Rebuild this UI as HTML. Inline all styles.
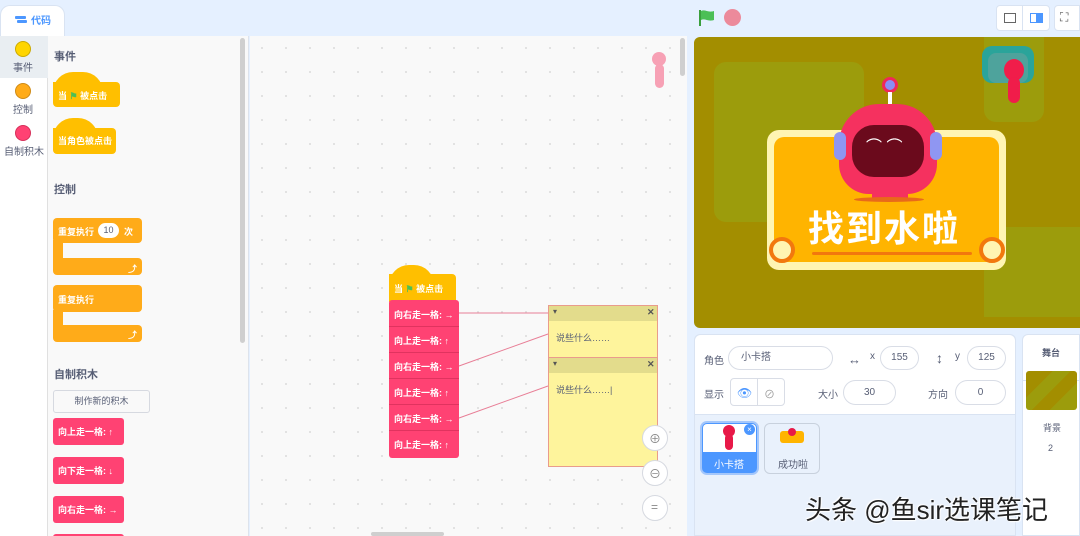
<!DOCTYPE html><html><head><meta charset="utf-8"><style>
*{margin:0;padding:0;box-sizing:border-box}
html,body{width:1080px;height:536px;overflow:hidden}
body{background:#e5f0ff;font-family:"Liberation Sans","Noto Sans CJK SC",sans-serif;position:relative;font-size:11px;color:#575e75}
.a{position:absolute}
.t{position:absolute;white-space:nowrap}
.bw{color:#fff;font-weight:bold;font-size:9px}
.pink{background:#ff4273;border-radius:3px;position:absolute}
.ctl{background:#ffab19;position:absolute}
.ev{background:#ffbf00;position:absolute}
.inp{position:absolute;background:#fff;border:1px solid #d9dde6;border-radius:14px;text-align:center;font-size:10px;color:#575e75}
.cir{position:absolute;width:26px;height:26px;border-radius:50%;background:#fff;border:1px solid #d6d9e0}
</style></head><body>
<div class="a" style="left:0;top:5px;width:65px;height:32px;background:#fff;border-radius:10px 10px 0 0;border:1px solid #d9e3f2;border-bottom:none"></div>
<div class="a" style="left:15px;top:16px;width:11px;height:3px;background:#4c97ff;border-radius:1px"></div>
<div class="a" style="left:17px;top:20px;width:10px;height:3px;background:#4c97ff;border-radius:1px"></div>
<div class="t" style="left:31px;top:12px;color:#4c97ff;font-size:10px;font-weight:bold">代码</div>
<div class="a" style="left:0;top:36px;width:48px;height:500px;background:#fff;border-right:1px solid #e0e0e0"></div>
<div class="a" style="left:0;top:36px;width:48px;height:42px;background:#e9eef2"></div>
<div class="a" style="left:15px;top:41px;width:16px;height:16px;border-radius:50%;background:#ffd500;border:1px solid #ccaa00"></div>
<div class="t" style="left:13px;top:59px;font-size:10px">事件</div>
<div class="a" style="left:15px;top:83px;width:16px;height:16px;border-radius:50%;background:#ffab19;border:1px solid #cf8b17"></div>
<div class="t" style="left:13px;top:101px;font-size:10px">控制</div>
<div class="a" style="left:15px;top:125px;width:16px;height:16px;border-radius:50%;background:#ff4273;border:1px solid #d6305a"></div>
<div class="t" style="left:4px;top:143px;font-size:10px">自制积木</div>
<div class="a" style="left:48px;top:36px;width:201px;height:500px;background:#f9f9f9;border-right:1px solid #dde3ec"></div>
<div class="a" style="left:240px;top:38px;width:5px;height:305px;background:#cfcfcf;border-radius:3px"></div>
<div class="t" style="left:54px;top:48px;font-size:11px;font-weight:bold;color:#575e75">事件</div>
<div class="ev" style="left:53px;top:72px;width:50px;height:20px;border-radius:25px 25px 0 0"></div>
<div class="ev" style="left:53px;top:82px;width:67px;height:25px;border-radius:0 4px 4px 4px"></div>
<div class="t bw" style="left:58px;top:89px">当 <span style="color:#4cbf56">⚑</span> 被点击</div>
<div class="ev" style="left:53px;top:118px;width:45px;height:20px;border-radius:25px 25px 0 0"></div>
<div class="ev" style="left:53px;top:128px;width:63px;height:26px;border-radius:0 4px 4px 4px"></div>
<div class="t bw" style="left:58px;top:134px">当角色被点击</div>
<div class="t" style="left:54px;top:181px;font-size:11px;font-weight:bold">控制</div>
<div class="ctl" style="left:53px;top:218px;width:89px;height:25px;border-radius:4px"></div>
<div class="ctl" style="left:53px;top:240px;width:10px;height:20px"></div>
<div class="ctl" style="left:53px;top:258px;width:89px;height:17px;border-radius:0 4px 4px 4px"></div>
<div class="t bw" style="left:58px;top:225px">重复执行</div>
<div class="a" style="left:98px;top:223px;width:21px;height:15px;background:#fff;border-radius:8px;font-size:9px;text-align:center;line-height:15px;color:#575e75">10</div>
<div class="t bw" style="left:124px;top:225px">次</div>
<div class="t bw" style="left:128px;top:262px">⤴</div>
<div class="ctl" style="left:53px;top:285px;width:89px;height:27px;border-radius:4px"></div>
<div class="ctl" style="left:53px;top:310px;width:10px;height:17px"></div>
<div class="ctl" style="left:53px;top:325px;width:89px;height:17px;border-radius:0 4px 4px 4px"></div>
<div class="t bw" style="left:58px;top:293px">重复执行</div>
<div class="t bw" style="left:128px;top:328px">⤴</div>
<div class="t" style="left:54px;top:366px;font-size:11px;font-weight:bold">自制积木</div>
<div class="a" style="left:53px;top:390px;width:97px;height:23px;background:#f9f9f9;border:1px solid #d6d9e0;border-radius:3px;font-size:9px;text-align:center;line-height:21px">制作新的积木</div>
<div class="pink" style="left:53px;top:418px;width:71px;height:27px"></div><div class="t bw" style="left:58px;top:425px">向上走一格: ↑</div>
<div class="pink" style="left:53px;top:457px;width:71px;height:27px"></div><div class="t bw" style="left:58px;top:464px">向下走一格: ↓</div>
<div class="pink" style="left:53px;top:496px;width:71px;height:27px"></div><div class="t bw" style="left:58px;top:503px">向右走一格: →</div>
<div class="pink" style="left:53px;top:534px;width:71px;height:10px"></div>
<div class="a" style="left:250px;top:36px;width:437px;height:500px;background-color:#f9f9f9;background-image:radial-gradient(#e0e0e0 1px,transparent 1.2px);background-size:24px 24px"></div>
<div class="a" style="left:680px;top:38px;width:5px;height:38px;background:#cfcfcf;border-radius:3px"></div>
<div class="a" style="left:371px;top:532px;width:73px;height:4px;background:#cfcfcf;border-radius:2px"></div>
<div class="a" style="left:652px;top:52px;width:14px;height:14px;border-radius:50%;background:#f7a1b5"></div>
<div class="a" style="left:655px;top:64px;width:9px;height:24px;border-radius:5px;background:#f7a1b5"></div>
<div class="ev" style="left:389px;top:265px;width:45px;height:20px;border-radius:25px 25px 0 0"></div>
<div class="ev" style="left:389px;top:274px;width:67px;height:28px;border-radius:0 4px 0 0"></div>
<div class="t bw" style="left:394px;top:282px">当 <span style="color:#4cbf56">⚑</span> 被点击</div>
<div class="pink" style="left:389px;top:300px;width:70px;height:158px"></div>
<div class="a" style="left:389px;top:326px;width:70px;height:1px;background:#e0335f"></div>
<div class="a" style="left:389px;top:352px;width:70px;height:1px;background:#e0335f"></div>
<div class="a" style="left:389px;top:378px;width:70px;height:1px;background:#e0335f"></div>
<div class="a" style="left:389px;top:404px;width:70px;height:1px;background:#e0335f"></div>
<div class="a" style="left:389px;top:430px;width:70px;height:1px;background:#e0335f"></div>
<div class="t bw" style="left:394px;top:308px">向右走一格: →</div>
<div class="t bw" style="left:394px;top:334px">向上走一格: ↑</div>
<div class="t bw" style="left:394px;top:360px">向右走一格: →</div>
<div class="t bw" style="left:394px;top:386px">向上走一格: ↑</div>
<div class="t bw" style="left:394px;top:412px">向右走一格: →</div>
<div class="t bw" style="left:394px;top:438px">向上走一格: ↑</div>
<svg class="a" style="left:0;top:0" width="1080" height="536"><g stroke="#e87e96" stroke-width="1"><line x1="459" y1="313" x2="548" y2="313"/><line x1="459" y1="366" x2="548" y2="334"/><line x1="459" y1="418" x2="548" y2="386"/></g></svg>
<div class="a" style="left:548px;top:305px;width:110px;height:53px;background:#fef49c;border:1px solid #e99c8c"></div>
<div class="a" style="left:549px;top:306px;width:108px;height:15px;background:#e3dc8c"></div>
<div class="t" style="left:553px;top:307px;font-size:8px;color:#555">▾</div><div class="t" style="left:647px;top:307px;font-size:9px;font-weight:bold;color:#555">✕</div>
<div class="t" style="left:556px;top:331px;font-size:9px">说些什么……</div>
<div class="a" style="left:548px;top:357px;width:110px;height:110px;background:#fef49c;border:1px solid #e99c8c"></div>
<div class="a" style="left:549px;top:358px;width:108px;height:15px;background:#e3dc8c"></div>
<div class="t" style="left:553px;top:359px;font-size:8px;color:#555">▾</div><div class="t" style="left:647px;top:359px;font-size:9px;font-weight:bold;color:#555">✕</div>
<div class="t" style="left:556px;top:383px;font-size:9px">说些什么……|</div>
<div class="cir" style="left:642px;top:425px"></div><div class="t" style="left:649px;top:430px;font-size:12px;color:#888">⊕</div>
<div class="cir" style="left:642px;top:460px"></div><div class="t" style="left:649px;top:465px;font-size:12px;color:#888">⊖</div>
<div class="cir" style="left:642px;top:495px"></div><div class="t" style="left:651px;top:500px;font-size:12px;color:#888">=</div>
<svg class="a" style="left:698px;top:8px" width="20" height="20"><path d="M2 2v16" stroke="#3a9f3d" stroke-width="2"/><path d="M3 3c4-2 7 2 13 0v9c-6 2-9-2-13 0z" fill="#4cbf56"/></svg>
<div class="a" style="left:724px;top:9px;width:17px;height:17px;border-radius:50%;background:#ec8a9b"></div>
<div class="a" style="left:996px;top:5px;width:54px;height:26px;background:#fff;border:1px solid #d9e3f2;border-radius:4px"></div>
<div class="a" style="left:1022px;top:5px;width:1px;height:26px;background:#d9e3f2"></div>
<div class="a" style="left:1004px;top:13px;width:12px;height:10px;border:1px solid #666"></div>
<div class="a" style="left:1030px;top:13px;width:13px;height:10px;border:1px solid #4c97ff;background:linear-gradient(90deg,#fff 45%,#4c97ff 45%)"></div>
<div class="a" style="left:1054px;top:5px;width:26px;height:26px;background:#fff;border:1px solid #d9e3f2;border-radius:4px 0 0 4px"></div>
<div class="t" style="left:1060px;top:10px;font-size:12px;color:#555">⛶</div>
<div class="a" style="left:694px;top:37px;width:386px;height:291px;background:#a38e00;border-radius:6px 0 0 6px;overflow:hidden">
 <div class="a" style="left:20px;top:25px;width:150px;height:160px;background:#9c9c0c;border-radius:12px"></div>
 <div class="a" style="left:80px;top:160px;width:110px;height:100px;background:#9c9c0c;border-radius:12px"></div>
 <div class="a" style="left:190px;top:140px;width:120px;height:80px;background:#9c9c0c;border-radius:12px"></div>
 <div class="a" style="left:220px;top:190px;width:180px;height:90px;background:#9c9c0c;border-radius:12px"></div>
 <div class="a" style="left:60px;top:215px;width:230px;height:80px;background:#a38e00;border-radius:12px"></div>
 <div class="a" style="left:290px;top:0;width:60px;height:85px;background:#9c9c0c;border-radius:0 0 12px 12px"></div>
 <div class="a" style="left:288px;top:9px;width:52px;height:37px;background:#2aa49a;border-radius:10px"></div>
 <div class="a" style="left:294px;top:16px;width:40px;height:30px;background:#4ea39c;border-radius:8px"></div>
 <div class="a" style="left:310px;top:22px;width:20px;height:22px;background:#f01d4a;border-radius:50%"></div>
 <div class="a" style="left:314px;top:40px;width:12px;height:26px;background:#f01d4a;border-radius:6px"></div>
 <div class="a" style="left:73px;top:93px;width:239px;height:140px;background:#fff5b3;border-radius:12px"></div>
 <div class="a" style="left:80px;top:100px;width:225px;height:125px;background:#ffb400;border-radius:10px"></div>
 <div class="a" style="left:118px;top:215px;width:160px;height:3px;background:#f2780e;border-radius:2px"></div>
 <div class="a" style="left:75px;top:200px;width:26px;height:26px;border-radius:50%;background:#fff5b3;border:4px solid #f2780e"></div>
 <div class="a" style="left:285px;top:200px;width:26px;height:26px;border-radius:50%;background:#fff5b3;border:4px solid #f2780e"></div>
 <div class="t" style="left:114px;top:163px;font-size:36px;font-weight:bold;color:#fff;letter-spacing:2px">找到水啦</div>
 <div class="a" style="left:188px;top:40px;width:16px;height:16px;border-radius:50%;background:#8a8ef5;border:3px solid #f0285a"></div>
 <div class="a" style="left:194px;top:55px;width:4px;height:14px;background:#fff"></div>
 <div class="a" style="left:145px;top:67px;width:98px;height:90px;background:#f5315f;border-radius:40px 40px 30px 30px"></div>
 <div class="a" style="left:140px;top:95px;width:12px;height:28px;background:#8f96f2;border-radius:6px"></div>
 <div class="a" style="left:236px;top:95px;width:12px;height:28px;background:#8f96f2;border-radius:6px"></div>
 <div class="a" style="left:158px;top:88px;width:72px;height:52px;background:#6b0a1c;border-radius:22px"></div>
 <div class="t" style="left:172px;top:96px;font-size:16px;color:#fff">⌒ ⌒</div>
 <div class="a" style="left:178px;top:150px;width:36px;height:12px;background:#f5315f"></div>
 <div class="a" style="left:160px;top:160px;width:70px;height:5px;background:#e86a1a;border-radius:50%"></div>
</div>
<div class="a" style="left:694px;top:334px;width:322px;height:202px;background:#e9f1fc;border:1px solid #d9e3f2;border-radius:6px 6px 0 0"></div>
<div class="a" style="left:695px;top:335px;width:320px;height:80px;background:#fff;border-radius:6px 6px 0 0;border-bottom:1px solid #d9e3f2"></div>
<div class="t" style="left:704px;top:352px;font-size:10px">角色</div>
<div class="inp" style="left:728px;top:346px;width:105px;height:24px;text-align:left;padding-left:12px;line-height:22px">小卡搭</div>
<div class="t" style="left:848px;top:352px;font-size:13px">↔</div><div class="t" style="left:870px;top:351px;font-size:10px">x</div>
<div class="inp" style="left:880px;top:346px;width:39px;height:24px;line-height:22px">155</div>
<div class="t" style="left:936px;top:350px;font-size:14px">↕</div><div class="t" style="left:955px;top:351px;font-size:10px">y</div>
<div class="inp" style="left:967px;top:346px;width:39px;height:24px;line-height:22px">125</div>
<div class="t" style="left:704px;top:386px;font-size:10px">显示</div>
<div class="a" style="left:730px;top:378px;width:55px;height:28px;border:1px solid #d9dde6;border-radius:4px;background:#fff"></div>
<div class="a" style="left:757px;top:378px;width:1px;height:28px;background:#d9dde6"></div>
<div class="t" style="left:737px;top:386px;font-size:12px;color:#4c97ff">👁</div>
<div class="t" style="left:764px;top:386px;font-size:11px;color:#999">⊘</div>
<div class="t" style="left:818px;top:386px;font-size:10px">大小</div>
<div class="inp" style="left:843px;top:380px;width:53px;height:25px;line-height:23px">30</div>
<div class="t" style="left:928px;top:386px;font-size:10px">方向</div>
<div class="inp" style="left:955px;top:380px;width:51px;height:25px;line-height:23px">0</div>
<div class="a" style="left:700px;top:421px;width:59px;height:54px;border-radius:7px;background:#4c97ff;border:2px solid #a4c7fb"></div>
<div class="a" style="left:703px;top:424px;width:53px;height:28px;background:#fff;border-radius:4px 4px 0 0"></div>
<div class="a" style="left:723px;top:425px;width:12px;height:12px;border-radius:50%;background:#e81948"></div>
<div class="a" style="left:725px;top:434px;width:8px;height:16px;border-radius:4px;background:#e81948"></div>
<div class="a" style="left:744px;top:424px;width:11px;height:11px;border-radius:50%;background:#4c97ff;color:#fff;font-size:8px;text-align:center;line-height:11px">×</div>
<div class="t" style="left:714px;top:456px;color:#fff;font-size:10px">小卡搭</div>
<div class="a" style="left:764px;top:423px;width:56px;height:51px;border-radius:6px;background:#e9f1fc;border:1px solid #c8d1dd"></div>
<div class="a" style="left:780px;top:431px;width:24px;height:12px;background:#ffb400;border-radius:3px"></div>
<div class="a" style="left:788px;top:428px;width:8px;height:8px;background:#e81948;border-radius:50%"></div>
<div class="t" style="left:778px;top:456px;font-size:10px">成功啦</div>
<div class="a" style="left:1022px;top:334px;width:58px;height:202px;background:#fff;border:1px solid #d9e3f2;border-radius:6px 0 0 0"></div>
<div class="a" style="left:1023px;top:380px;width:57px;height:1px;background:#d9e3f2"></div>
<div class="t" style="left:1042px;top:346px;font-size:9px;font-weight:bold">舞台</div>
<div class="a" style="left:1026px;top:371px;width:51px;height:39px;border-radius:3px;background-image:linear-gradient(135deg,#a38e00 30%,#9c9c0c 30%,#9c9c0c 50%,#a38e00 50%,#a38e00 70%,#9c9c0c 70%)"></div>
<div class="t" style="left:1043px;top:421px;font-size:9px">背景</div>
<div class="t" style="left:1048px;top:443px;font-size:9px">2</div>
<div class="t" style="left:805px;top:490px;font-size:26px;color:#222;text-shadow:0 0 2px #fff,1px 1px 1px #fff,-1px -1px 1px #fff">头条 @鱼sir选课笔记</div>
</body></html>
